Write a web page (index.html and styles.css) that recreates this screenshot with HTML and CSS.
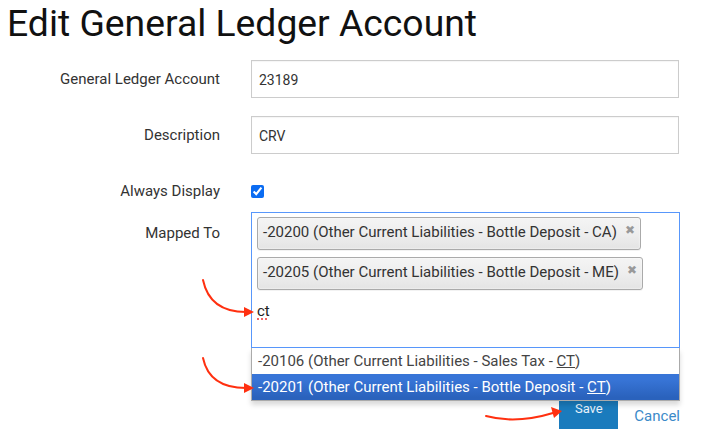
FILE: index.html
```html
<!DOCTYPE html>
<html lang="en">
<head>
    <meta charset="UTF-8">
    <title>Edit General Ledger Account</title>
    <link rel="stylesheet" href="styles.css">
</head>
<body>
    <h1 class="page-title">Edit General Ledger Account</h1>

    <form class="gl-form">
        <div class="form-row">
            <label class="form-label">General Ledger Account</label>
            <input class="form-input" type="text" value="23189">
        </div>
        <div class="form-row">
            <label class="form-label">Description</label>
            <input class="form-input" type="text" value="CRV">
        </div>
        <div class="form-row row-check">
            <label class="form-label">Always Display</label>
            <input class="form-check" type="checkbox" checked>
        </div>
        <div class="form-row row-mapped">
            <label class="form-label">Mapped To</label>
            <div class="chosen-container">
                <ul class="chosen-choices">
                    <li class="search-choice"><span>-20200 (Other Current Liabilities - Bottle Deposit - CA)</span><a class="choice-close">&#x2716;</a></li>
                    <li class="search-choice"><span>-20205 (Other Current Liabilities - Bottle Deposit - ME)</span><a class="choice-close">&#x2716;</a></li>
                    <li class="search-field"><span class="typed">ct</span></li>
                </ul>
                <ul class="chosen-results">
                    <li class="result">-20106 (Other Current Liabilities - Sales Tax - <em>CT</em>)</li>
                    <li class="result highlighted">-20201 (Other Current Liabilities - Bottle Deposit - <em>CT</em>)</li>
                </ul>
            </div>
        </div>
        <div class="form-actions">
            <button class="btn-save" type="button">Save</button>
            <a class="link-cancel" href="#">Cancel</a>
        </div>
    </form>

    <!-- annotation arrows -->
    <svg class="arrows" width="707" height="443" viewBox="0 0 707 443">
        <g fill="none" stroke="#ff3010" stroke-width="2" stroke-linecap="round">
            <path d="M203,280 C207,299 220,312 246,312"/>
            <path d="M203,358 C207,377 220,388 246,388"/>
            <path d="M486,416 C508,422 530,420 553,413"/>
        </g>
        <g fill="#ff3010">
            <polygon points="244,307 254,312 244,317"/>
            <polygon points="244,383 254,388 244,393"/>
            <polygon points="551,407 562,411 554,418"/>
        </g>
    </svg>
</body>
</html>
```

FILE: styles.css
```css
body {
    margin: 0;
    padding: 0 7px;
    font-family: Roboto, "Liberation Sans", sans-serif;
    color: #222;
    background: #fff;
    position: relative;
    height: 443px;
    overflow: hidden;
}

.page-title {
    margin: 0;
    padding-top: 1px;
    font-size: 37.3px;
    font-weight: 400;
    line-height: 44px;
    color: #111;
}

.gl-form {
    margin-top: 15px;
    display: flex;
    flex-direction: column;
}

.form-row {
    display: flex;
    align-items: center;
    margin-bottom: 18px;
}

.form-label {
    width: 213px;
    padding-right: 31px;
    text-align: right;
    font-size: 15px;
    color: #333;
    flex-shrink: 0;
}

.form-input {
    width: 428px;
    height: 38px;
    box-sizing: border-box;
    border: 1px solid #ccc;
    padding: 2px 7px 0;
    font-family: Roboto, "Liberation Sans", sans-serif;
    font-size: 14px;
    color: #333;
    outline: none;
    box-shadow: inset 0 1px 1px rgba(0, 0, 0, 0.04);
}

.row-check {
    margin-top: 12px;
    margin-bottom: 14px;
    height: 14px;
}

.form-check {
    margin: 0;
    width: 13px;
    height: 13px;
    accent-color: #0b6cf2;
}

.row-mapped {
    align-items: flex-start;
    margin-bottom: 0;
}

.row-mapped .form-label {
    padding-top: 12px;
}

.chosen-container {
    position: relative;
    width: 429px;
}

.chosen-choices {
    margin: 0;
    padding: 4px 5px 0;
    list-style: none;
    height: 136px;
    box-sizing: border-box;
    border: 1px solid #5897fb;
    background: #fff;
    display: flex;
    flex-direction: column;
    align-items: flex-start;
    gap: 7px;
}

.search-choice {
    display: flex;
    align-items: flex-start;
    height: 33px;
    box-sizing: border-box;
    padding: 5px 0 0 5px;
    border: 1px solid #aaa;
    border-radius: 3px;
    background: linear-gradient(#f4f4f4, #eee 50%, #e4e4e4);
    box-shadow: 0 0 2px #fff inset, 0 1px 0 rgba(0, 0, 0, 0.05);
    font-size: 15px;
    color: #333;
}

.search-choice span {
    line-height: 18px;
}

.choice-close {
    font-size: 12px;
    color: #999;
    padding: 0 5px 0 8px;
    line-height: 14px;
}

.search-field {
    padding-top: 5px;
    font-size: 15px;
    color: #222;
}

.typed {
    text-decoration: underline dotted #e33;
    text-underline-offset: 3px;
}

.chosen-results {
    position: absolute;
    top: 100%;
    left: 0;
    right: 0;
    z-index: 5;
    margin: 0;
    padding: 0;
    list-style: none;
    background: #fff;
    border: 1px solid #aaa;
    border-top: 0;
    box-shadow: 0 4px 5px rgba(0, 0, 0, 0.15);
}

.result {
    height: 26px;
    line-height: 26px;
    padding-left: 6px;
    font-size: 15px;
    color: #444;
}

.result em {
    font-style: normal;
    text-decoration: underline;
}

.result.highlighted {
    color: #fff;
    background: linear-gradient(#3875d7 20%, #2a62bc 90%);
}

.form-actions {
    margin-top: 45px;
    width: 673px;
    box-sizing: border-box;
    display: flex;
    justify-content: flex-end;
    align-items: center;
    gap: 16px;
}

.btn-save {
    width: 59px;
    height: 36px;
    border: 0;
    padding: 0 0 5px;
    background: #1a7bbd;
    color: #e8f2fa;
    font-family: Roboto, "Liberation Sans", sans-serif;
    font-size: 13px;
}

.link-cancel {
    color: #3b8ac9;
    font-size: 15px;
    text-decoration: none;
    padding-top: 10px;
}

.arrows {
    position: absolute;
    top: 0;
    left: 0;
    pointer-events: none;
    z-index: 10;
}
```
